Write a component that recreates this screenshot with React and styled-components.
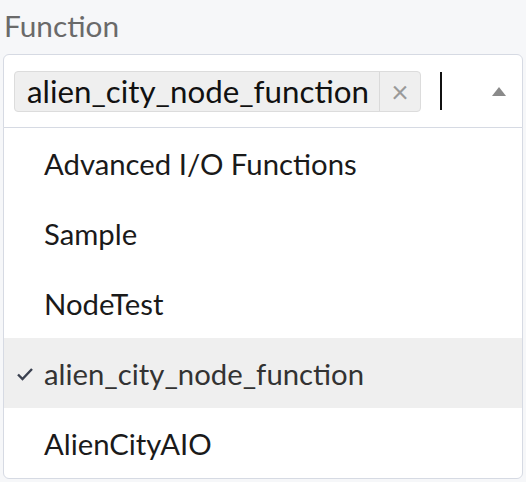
import React from "react";
import styled, { createGlobalStyle } from "styled-components";

const GlobalStyle = createGlobalStyle`
	html, body {
		margin: 0;
		padding: 0;
		background: #f6f7f9;
		font-family: Lato, "Open Sans", sans-serif;
	}
`;

const Field = styled.div`
	padding: 8px 3px 0 3px;
	width: 520px;
`;

const Label = styled.div`
	font-size: 29.8px;
	line-height: 36px;
	color: #6a6a6a;
	padding-left: 1px;
	margin-bottom: 10px;
`;

const Control = styled.div`
	display: flex;
	align-items: center;
	height: 72px;
	background: #fff;
	border: 1px solid #d6dae3;
	border-radius: 6px 6px 0 0;
	padding: 0 16px 0 10px;
`;

const Chip = styled.div`
	display: flex;
	align-items: stretch;
	height: 39px;
	background: #efefef;
	border: 1px solid #dcdcdc;
	border-radius: 4px;
	color: #111;
`;

const ChipLabel = styled.span`
	font-size: 31.3px;
	line-height: 39px;
	padding: 0 10px 0 12px;
`;

const ChipRemove = styled.span`
	display: flex;
	align-items: center;
	justify-content: center;
	width: 40px;
	border-left: 1px solid #dadada;
	color: #9a9a9a;
	font-size: 30px;
`;

const Cursor = styled.span`
	width: 2px;
	height: 38px;
	background: #111;
	margin-left: 19px;
`;

const Arrow = styled.span`
	margin-left: auto;
	width: 0;
	height: 0;
	border-left: 7px solid transparent;
	border-right: 7px solid transparent;
	border-bottom: 9px solid #8a8a8a;
`;

const Menu = styled.ul`
	list-style: none;
	margin: -1px 0 0 0;
	padding: 0;
	background: #fff;
	border: 1px solid #d6dae3;
	border-radius: 0 0 6px 6px;
`;

const Option = styled.li`
	position: relative;
	height: 70px;
	display: flex;
	align-items: center;
	padding-left: 40px;
	font-size: 29.3px;
	color: ${(p) => (p.$selected ? "#333" : "#1a1a1a")};
	background: ${(p) => (p.$selected ? "#efefef" : "transparent")};
`;

const Check = styled.svg`
	position: absolute;
	left: 12px;
	top: 29px;
`;

const options = [
	"Advanced I/O Functions",
	"Sample",
	"NodeTest",
	"alien_city_node_function",
	"AlienCityAIO",
];

export default function App() {
	const selected = "alien_city_node_function";
	return (
		<>
			<GlobalStyle />
			<Field>
				<Label>Function</Label>
				<Control>
					<Chip>
						<ChipLabel>{selected}</ChipLabel>
						<ChipRemove>×</ChipRemove>
					</Chip>
					<Cursor />
					<Arrow />
				</Control>
				<Menu>
					{options.map((o) => (
						<Option key={o} $selected={o === selected}>
							{o === selected && (
								<Check width="18" height="14" viewBox="0 0 18 14">
									<path
										d="M2 7.5 L6.5 12 L16 2"
										fill="none"
										stroke="#3b4150"
										strokeWidth="2.4"
									/>
								</Check>
							)}
							{o}
						</Option>
					))}
				</Menu>
			</Field>
		</>
	);
}
